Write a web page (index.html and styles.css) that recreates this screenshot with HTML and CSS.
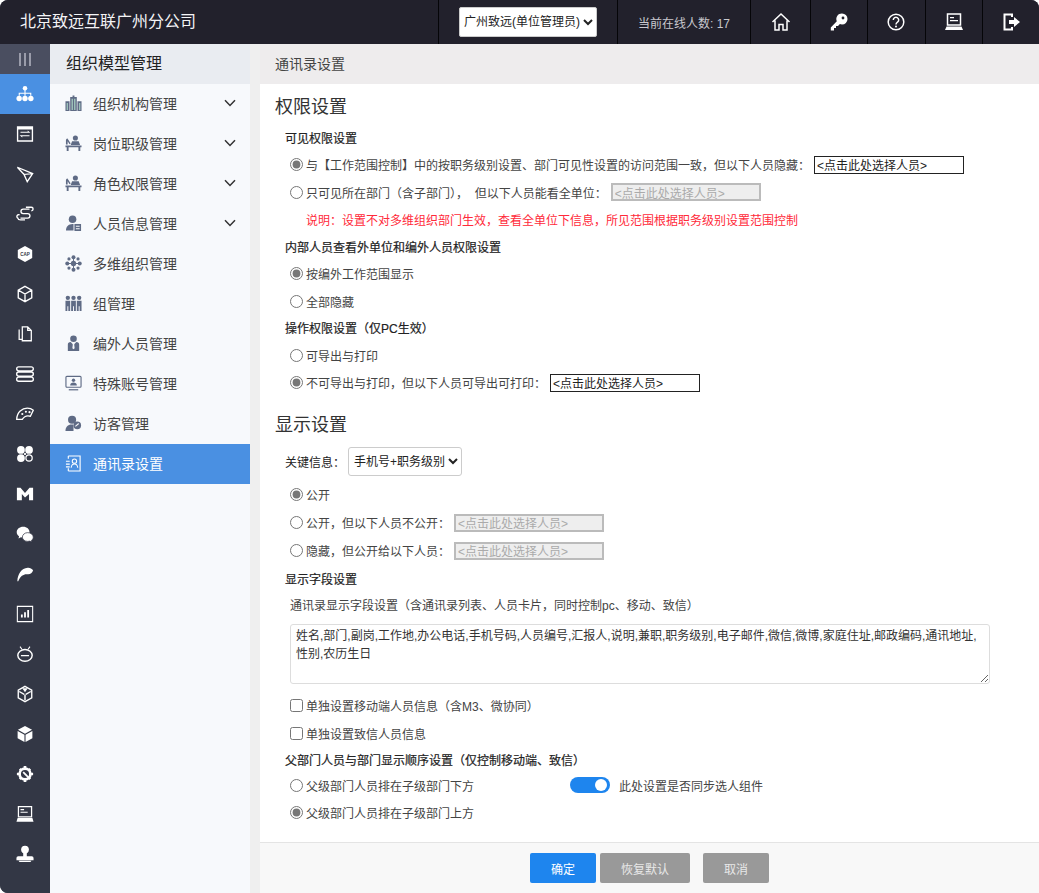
FILE: index.html
```html
<!DOCTYPE html>
<html lang="zh-CN">
  <head>
    <meta charset="UTF-8" />
    <title>通讯录设置</title>
    <link rel="stylesheet" href="styles.css">
  </head>

  <body>
    <div class="app">
      <header class="topbar">
        <div class="brand">北京致远互联广州分公司</div>
        <div class="top-cell unit-cell">
          <select class="unit-select"><option>广州致远(单位管理员)</option></select>
        </div>
        <div class="top-cell online">当前在线人数: 17</div>
        <div class="top-cell top-btn first">
          <svg viewBox="0 0 20 20" class="top-icon"><path d="M1.500 10 10 2l8.500 8M4 8.500V18h4v-5.500h4V18h4V8.500" fill="none" stroke="#fff" stroke-width="1.500"/></svg>
        </div>
        <div class="top-cell top-btn">
          <svg viewBox="0 0 20 20" class="top-icon"><path d="M13 1.500a5.500 5.500 0 0 1 0 11c-.8 0-1.500-.2-2.100-.4L9 14H7v2H5v2.500H1.800v-3l6-6.200A5.500 5.500 0 0 1 13 1.500z" fill="#fff"/><circle cx="14" cy="6" r="1.400" fill="#22212c"/></svg>
        </div>
        <div class="top-cell top-btn">
          <svg viewBox="0 0 20 20" class="top-icon"><circle cx="10" cy="10" r="7.800" fill="none" stroke="#fff" stroke-width="1.500"/><path d="M7.300 8a2.700 2.700 0 1 1 4.200 2.200c-1 .7-1.500 1.100-1.500 2.400" fill="none" stroke="#fff" stroke-width="1.500"/><circle cx="10" cy="14.600" r="1" fill="#fff"/></svg>
        </div>
        <div class="top-cell top-btn">
          <svg viewBox="0 0 20 20" class="top-icon"><path d="M3.500 2h13v11h-13z" fill="none" stroke="#fff" stroke-width="1.500"/><path d="M2.500 14.500h15l1.500 3.500H1z" fill="#fff"/><path d="M6 5h4v1.200H6zM6 8h8v1.200H6z" fill="#fff"/></svg>
        </div>
        <div class="top-cell top-btn">
          <svg viewBox="0 0 20 20" class="top-icon"><path d="M11 5V2.500H3.500v15H11V15" fill="none" stroke="#fff" stroke-width="2"/><path d="M8 8h5V5l6 5-6 5v-3H8z" fill="#fff"/></svg>
        </div>
      </header>

      <div class="body-wrap">
        <nav class="rail">
          <div class="rail-toggle"><span></span><span></span><span></span></div>
          <a class="rail-item active">
            <svg viewBox="0 0 20 20" class="rail-icon"><circle cx="10" cy="3.500" r="2.500"/><path d="M9.400 5h1.200v3.500h6.400V12h-1.200V9.700h-5.200V12H9.400V9.700H4.200V12H3V8.500h6.400z"/><circle cx="3.500" cy="15" r="3"/><circle cx="10" cy="15" r="3"/><circle cx="16.500" cy="15" r="3"/></svg>
          </a>
          <a class="rail-item">
            <svg viewBox="0 0 20 20" class="rail-icon"><path fill-rule="evenodd" d="M1 1.500h18v17H1zM2.500 5v12h15V5z"/><path d="M5 7.500h8V6l3 2.500H5zM15 12.500H7V14l-3-2.500h11z"/></svg>
          </a>
          <a class="rail-item">
            <svg viewBox="0 0 20 20" class="rail-icon"><path d="M1.500 2.500 18.500 9.500 12.500 18.500 9 10.500 18.500 9.500M1.500 2.500 9 10.500" fill="none" stroke="#fff" stroke-width="1.500"/></svg>
          </a>
          <a class="rail-item">
            <svg viewBox="0 0 20 20" class="rail-icon"><path d="M15 4.500H8a2.500 2.500 0 0 0 0 5h5a2.500 2.500 0 0 1 0 5H5M11 2.500h6a2 2 0 0 1 0 4M4 11a2 2 0 0 0-2 3.500c.3 1.500 1.500 2 3 2h5" fill="none" stroke="#fff" stroke-width="1.500"/></svg>
          </a>
          <a class="rail-item">
            <svg viewBox="0 0 20 20" class="rail-icon"><path d="M10 1l8 4.500v9L10 19l-8-4.500v-9z"/><text x="10" y="11.800" class="cap-text">CAP</text></svg>
          </a>
          <a class="rail-item">
            <svg viewBox="0 0 20 20" class="rail-icon"><path d="M10 1.500l7.500 4.200v8.600L10 18.500l-7.500-4.200V5.700zM2.500 5.700 10 10l7.500-4.300M10 10v8.500" fill="none" stroke="#fff" stroke-width="1.500"/></svg>
          </a>
          <a class="rail-item">
            <svg viewBox="0 0 20 20" class="rail-icon"><path d="M7 5.500V2h6l4 4v11.500H7zM13 2v4h4M3.500 5v11H7" fill="none" stroke="#fff" stroke-width="1.400"/></svg>
          </a>
          <a class="rail-item">
            <svg viewBox="0 0 20 20" class="rail-icon"><path d="M3 2h14a1.500 1.500 0 0 1 0 4.500H3A1.500 1.500 0 0 1 3 2zM3 7.800h14a1.500 1.500 0 0 1 0 4.500H3a1.500 1.500 0 0 1 0-4.500zM3 13.500h14a1.500 1.500 0 0 1 0 4.500H3a1.500 1.500 0 0 1 0-4.500z" fill="none" stroke="#fff" stroke-width="1.500"/></svg>
          </a>
          <a class="rail-item">
            <svg viewBox="0 0 20 20" class="rail-icon"><path d="M.8 16C1 8 7 3.500 12.500 3.500c2.500 0 5 .8 6.700 2.300L16 12.500c-3-1-6.500-.5-9 3.500z" fill="none" stroke="#fff" stroke-width="1.500"/><circle cx="7" cy="10" r="1.200"/><circle cx="11" cy="7.500" r="1.200"/><circle cx="15" cy="8" r="1.200"/></svg>
          </a>
          <a class="rail-item">
            <svg viewBox="0 0 20 20" class="rail-icon"><circle cx="5.500" cy="5.500" r="4.300"/><circle cx="14.500" cy="5.500" r="4.300"/><circle cx="5.500" cy="14.500" r="4.300"/><circle cx="14.500" cy="14.500" r="3.500" fill="none" stroke="#fff" stroke-width="1.400"/><path d="M9 9h2v2H9z"/></svg>
          </a>
          <a class="rail-item">
            <svg viewBox="0 0 20 20" class="rail-icon"><path d="M1 3h4l5 6 5-6h4v14h-4.500V10L10 14l-3.500-4v7H1z"/></svg>
          </a>
          <a class="rail-item">
            <svg viewBox="0 0 20 20" class="rail-icon"><path d="M8 2C3.800 2 .8 4.700.8 8c0 1.900 1 3.500 2.600 4.600L2.800 15l2.700-1.400c.8.200 1.600.3 2.500.3C12.200 13.900 15 11.200 15 8S12.200 2 8 2z"/><path d="M13 8.500c3.400 0 6.200 2.200 6.200 5 0 1.500-.8 2.800-2.100 3.700l.4 1.800-2.100-1.100c-.7.200-1.500.300-2.300.300-3.400 0-6-2.100-6-4.700s2.500-5 5.900-5z" stroke="#333745" stroke-width=".8"/></svg>
          </a>
          <a class="rail-item">
            <svg viewBox="0 0 20 20" class="rail-icon"><path d="M1.500 18C1.800 10 6 3.500 13 3c2.500-.2 4.500.8 6 2.800-1 3.500-3.500 5-6.500 4.500C9 9.800 5 11.800 2.500 18z"/></svg>
          </a>
          <a class="rail-item">
            <svg viewBox="0 0 20 20" class="rail-icon"><path d="M7 1.500H1.500v17H7M13 1.500h5.500v17H13M1.500 1.500h17M2 18.500h16" fill="none" stroke="#fff" stroke-width="1.200"/><path d="M5.500 10.500h2V14h-2zM9 8h2v6H9zM12.500 5.500h2V14h-2z"/></svg>
          </a>
          <a class="rail-item">
            <svg viewBox="0 0 20 20" class="rail-icon"><ellipse cx="10" cy="11.500" rx="8" ry="6.500" fill="none" stroke="#fff" stroke-width="1.600"/><path d="M5.500 11h9v1.500h-9zM5 1.500l2 3-1 .6-2-3zM15 1.500l-2 3 1 .6 2-3z"/></svg>
          </a>
          <a class="rail-item">
            <svg viewBox="0 0 20 20" class="rail-icon"><path d="M10 1.500l7.500 4.200v8.600L10 18.500l-7.500-4.200V5.700z" fill="none" stroke="#fff" stroke-width="1.500"/><path d="M9.200 10.500V17h1.600v-6.500zM9.500 9.800 4 6.600l-.8 1.300 5.500 3.200zM10.500 9.800 16 6.600l.8 1.300-5.500 3.200zM7 3.500h6L10 8z"/></svg>
          </a>
          <a class="rail-item">
            <svg viewBox="0 0 20 20" class="rail-icon"><path d="M10 1 17.800 5.300 10 9.600 2.200 5.300zM1.800 6.600 9.400 10.800V19L1.800 14.800zM18.200 6.600 10.600 10.800V19l7.600-4.200z"/></svg>
          </a>
          <a class="rail-item">
            <svg viewBox="0 0 20 20" class="rail-icon"><circle cx="10" cy="10" r="6" fill="none" stroke="#fff" stroke-width="3"/><path d="M8.500 1h3v3h-3zM8.500 16h3v3h-3zM1 8.500h3v3H1zM16 8.500h3v3h-3zM3.200 5.300l2-2 2 2-2 2zM12.800 14.700l2-2 2 2-2 2zM3.200 14.700l2-2 2 2-2 2zM12.800 5.300l2-2 2 2-2 2z"/><path d="M8 8l6 6" stroke="#fff" stroke-width="2"/></svg>
          </a>
          <a class="rail-item">
            <svg viewBox="0 0 20 20" class="rail-icon"><path d="M2.700 1.800h14.600v11.400H2.700z" fill="none" stroke="#fff" stroke-width="1.400"/><path d="M1.800 14.500h16.400l1.300 4H.5zM5 4.500h4v1.200H5zM5 7.500h8v1.200H5z"/></svg>
          </a>
          <a class="rail-item">
            <svg viewBox="0 0 20 20" class="rail-icon"><circle cx="10" cy="5" r="4.300"/><path d="M8 8h4v4.500h5.500a2 2 0 0 1 2 2V17H.5v-2.500a2 2 0 0 1 2-2H8zM3 17.500h14c0 1-1 1.500-2 1.500H5c-1 0-2-.5-2-1.500z"/></svg>
          </a>
        </nav>

        <aside class="sidebar">
          <div class="side-head">组织模型管理</div>
          <ul class="side-menu">
            <li class="side-item">
              <svg viewBox="0 0 18 18" class="side-icon"><path d="M5.500 2 8 2V.5h2V2l2.500 0V17h-7zM.5 6.500h4.300V17H.5zM13.200 6.500h4.300V17h-4.300z"/><path d="M7 4h1.300v12H7zM9.700 4H11v12H9.700zM1.800 8.500H3V16H1.800zM15 8.500h1.200V16H15z" fill="#a9d2c4"/></svg>
              <span class="side-label">组织机构管理</span>
              <svg viewBox="0 0 12 8" class="chevron"><path d="M1 1.200 6 6.500l5-5.300" fill="none" stroke="#333" stroke-width="1.500"/></svg>
            </li>
            <li class="side-item">
              <svg viewBox="0 0 18 18" class="side-icon"><circle cx="11" cy="3.200" r="2.700"/><path d="M7.500 6.500h7l1.500 4h-10zM.5 11h17v2h-1.300v4h-2v-4H3.800v4h-2v-4H.5zM1 10V5l1.300-1.500L3.500 5 6 9l-1.200.7-2-3V10z"/></svg>
              <span class="side-label">岗位职级管理</span>
              <svg viewBox="0 0 12 8" class="chevron"><path d="M1 1.200 6 6.500l5-5.300" fill="none" stroke="#333" stroke-width="1.500"/></svg>
            </li>
            <li class="side-item">
              <svg viewBox="0 0 18 18" class="side-icon"><circle cx="11" cy="3.200" r="2.700"/><path d="M7.500 6.500h7l1.500 4h-10zM.5 11h17v2h-1.300v4h-2v-4H3.800v4h-2v-4H.5zM1 10V5l1.300-1.500L3.500 5 6 9l-1.200.7-2-3V10z"/></svg>
              <span class="side-label">角色权限管理</span>
              <svg viewBox="0 0 12 8" class="chevron"><path d="M1 1.200 6 6.500l5-5.300" fill="none" stroke="#333" stroke-width="1.500"/></svg>
            </li>
            <li class="side-item">
              <svg viewBox="0 0 18 18" class="side-icon"><circle cx="8" cy="4.500" r="4"/><path d="M1 16.500c0-4 2.500-7 7-7h1v7z"/><path d="M10 9.500h7v7.500h-7z"/><path d="M11.500 11.500h4v1h-4zM11.500 14h4v1h-4z" fill="#f7f9fc"/></svg>
              <span class="side-label">人员信息管理</span>
              <svg viewBox="0 0 12 8" class="chevron"><path d="M1 1.200 6 6.500l5-5.300" fill="none" stroke="#333" stroke-width="1.500"/></svg>
            </li>
            <li class="side-item">
              <svg viewBox="0 0 18 18" class="side-icon"><circle cx="9" cy="9" r="2.800"/><circle cx="9" cy="2.400" r="2.100"/><circle cx="9" cy="15.600" r="2.100"/><circle cx="2.400" cy="9" r="2.100"/><circle cx="15.600" cy="9" r="2.100"/><circle cx="4.200" cy="4.200" r="1.700"/><circle cx="13.800" cy="4.200" r="1.700"/><circle cx="4.200" cy="13.800" r="1.700"/><circle cx="13.800" cy="13.800" r="1.700"/><path d="M8.500 2h1v14h-1zM2 8.500h14v1H2z"/></svg>
              <span class="side-label">多维组织管理</span>
            </li>
            <li class="side-item">
              <svg viewBox="0 0 18 18" class="side-icon"><circle cx="3" cy="3" r="2.300"/><circle cx="9" cy="3" r="2.300"/><circle cx="15" cy="3" r="2.300"/><path d="M.5 6h5v11H3.500v-5h-1v5H.5zM6.500 6h5v11H9.500v-5h-1v5H6.500zM12.500 6h5v11h-2v-5h-1v5h-2z"/></svg>
              <span class="side-label">组管理</span>
            </li>
            <li class="side-item">
              <svg viewBox="0 0 18 18" class="side-icon"><circle cx="9" cy="4" r="3.500"/><path d="M3 10c0-1.500 1-2.300 3-2.500l3 3 3-3c2 .2 3 1 3 2.500v7H3z"/><path d="M8.300 9.500h1.400l.5 4.500-1.200 1-1.200-1z" fill="#f7f9fc"/></svg>
              <span class="side-label">编外人员管理</span>
            </li>
            <li class="side-item">
              <svg viewBox="0 0 18 18" class="side-icon"><path d="M2 1.500h14a1 1 0 0 1 1 1V12a1 1 0 0 1-1 1H2a1 1 0 0 1-1-1V2.500a1 1 0 0 1 1-1z" fill="none" stroke="#5f6b85" stroke-width="1.200"/><circle cx="9" cy="5.500" r="1.800"/><path d="M5.500 11c0-2 1.500-3 3.500-3s3.500 1 3.500 3z"/><path d="M4 15h10v1.300H4z"/></svg>
              <span class="side-label">特殊账号管理</span>
            </li>
            <li class="side-item">
              <svg viewBox="0 0 18 18" class="side-icon"><circle cx="7.500" cy="5" r="4.300"/><path d="M.5 17c0-4.500 2.500-7 6.500-7 1 0 1.500.1 2 .3V17z"/><circle cx="13" cy="11" r="4"/><path d="M11 12l3.500-3" stroke="#f7f9fc" stroke-width="1.200"/></svg>
              <span class="side-label">访客管理</span>
            </li>
            <li class="side-item current">
              <svg viewBox="0 0 18 18" class="side-icon"><path d="M3.500 1h12.500v16H3.500" fill="none" stroke="#fff" stroke-width="1.200"/><path d="M3.500 1v3M3.500 14v3" stroke="#fff" stroke-width="1.200"/><path d="M1 6h4v1.200H1zM1 9h4v1.200H1zM1 12h4v1.200H1z" fill="#fff"/><circle cx="10" cy="6.500" r="2.300" fill="none" stroke="#fff" stroke-width="1.100"/><path d="M6.500 13.500c.3-2.500 1.700-4 3.500-4s3.200 1.500 3.500 4" fill="none" stroke="#fff" stroke-width="1.100"/></svg>
              <span class="side-label">通讯录设置</span>
            </li>
          </ul>
        </aside>

        <div class="gutter"></div>

        <main class="main">
          <div class="crumb">通讯录设置</div>
          <div class="content">
            <h2 class="sec-title">权限设置</h2>
            <div class="sub">可见权限设置</div>
            <label class="row">
              <input type="radio" name="vis" checked>
              <span>与【工作范围控制】中的按职务级别设置、部门可见性设置的访问范围一致，但以下人员隐藏：</span>
              <input class="picker" type="text" value="&lt;点击此处选择人员&gt;">
            </label>
            <label class="row">
              <input type="radio" name="vis">
              <span>只可见所在部门（含子部门），&nbsp;&nbsp;但以下人员能看全单位：</span>
              <input class="picker off" type="text" value="&lt;点击此处选择人员&gt;" disabled>
            </label>
            <div class="row note">说明：设置不对多维组织部门生效，查看全单位下信息，所见范围根据职务级别设置范围控制</div>
            <div class="sub">内部人员查看外单位和编外人员权限设置</div>
            <label class="row"><input type="radio" name="ext" checked><span>按编外工作范围显示</span></label>
            <label class="row"><input type="radio" name="ext"><span>全部隐藏</span></label>
            <div class="sub">操作权限设置（仅PC生效）</div>
            <label class="row"><input type="radio" name="exp"><span>可导出与打印</span></label>
            <label class="row">
              <input type="radio" name="exp" checked>
              <span>不可导出与打印，但以下人员可导出可打印：</span>
              <input class="picker" type="text" value="&lt;点击此处选择人员&gt;">
            </label>

            <h2 class="sec-title second">显示设置</h2>
            <div class="key-row">
              <span>关键信息：</span>
              <select class="key-select"><option>手机号+职务级别</option></select>
            </div>
            <label class="row wide"><input type="radio" name="pub" checked><span>公开</span></label>
            <label class="row wide">
              <input type="radio" name="pub"><span>公开，但以下人员不公开：</span>
              <input class="picker off" type="text" value="&lt;点击此处选择人员&gt;" disabled>
            </label>
            <label class="row wide">
              <input type="radio" name="pub"><span>隐藏，但公开给以下人员：</span>
              <input class="picker off" type="text" value="&lt;点击此处选择人员&gt;" disabled>
            </label>
            <div class="sub">显示字段设置</div>
            <div class="field-hint">通讯录显示字段设置（含通讯录列表、人员卡片，同时控制pc、移动、致信）</div>
            <textarea class="fields">姓名,部门,副岗,工作地,办公电话,手机号码,人员编号,汇报人,说明,兼职,职务级别,电子邮件,微信,微博,家庭住址,邮政编码,通讯地址,性别,农历生日</textarea>
            <label class="row check"><input type="checkbox"><span>单独设置移动端人员信息（含M3、微协同）</span></label>
            <label class="row check"><input type="checkbox"><span>单独设置致信人员信息</span></label>
            <div class="sub order">父部门人员与部门显示顺序设置（仅控制移动端、致信）</div>
            <div class="order-row">
              <label class="row"><input type="radio" name="ord"><span>父级部门人员排在子级部门下方</span></label>
              <div class="sync">
                <span class="switch"></span>
                <span>此处设置是否同步选人组件</span>
              </div>
            </div>
            <label class="row"><input type="radio" name="ord" checked><span>父级部门人员排在子级部门上方</span></label>
          </div>
          <footer class="actions">
            <button class="btn primary">确定</button>
            <button class="btn reset">恢复默认</button>
            <button class="btn cancel">取消</button>
          </footer>
        </main>
      </div>
    </div>
  </body>
</html>
```

FILE: styles.css
```css
* {
  box-sizing: border-box;
}
html,
body {
  margin: 0;
  height: 100%;
  background-color: white;
  overflow: hidden;
}
body {
  font-family: "Liberation Sans", "Noto Sans CJK SC", sans-serif;
  font-size: 12px;
  color: #333;
}
.app {
  height: 893px;
  display: flex;
  flex-direction: column;
  border-radius: 8px 8px 0 8px;
  overflow: hidden;
  background-color: #333745;
}

/* top bar */
.topbar {
  height: 44px;
  flex: none;
  display: flex;
  align-items: stretch;
  background-color: #22212c;
  color: white;
}
.brand {
  width: 438px;
  padding-left: 20px;
  font-size: 16px;
  line-height: 43px;
  color: #f4f4f6;
}
.top-cell {
  display: flex;
  align-items: center;
  justify-content: center;
  border-left: 1px solid #050508;
}
.unit-cell {
  width: 179px;
}
.unit-select {
  width: 138px;
  height: 30px;
  font-family: inherit;
  font-size: 12px;
  color: #222;
  background-color: white;
  border: 1px solid #ccc;
  border-radius: 2px;
  padding: 0;
}
.online {
  width: 133px;
  color: #c8c8ce;
}
.top-btn {
  width: 57.300px;
}
.top-btn.first {
  width: 60px;
}
.top-btn:last-child {
  flex: 1;
}
.top-icon {
  width: 20px;
  height: 20px;
}

.body-wrap {
  flex: 1;
  display: flex;
  min-height: 0;
}

/* icon rail */
.rail {
  width: 50px;
  flex: none;
  background-color: #333745;
}
.rail-toggle {
  height: 30px;
  display: flex;
  align-items: center;
  justify-content: center;
  gap: 3px;
  background-color: #4a4e60;
}
.rail-toggle span {
  width: 2px;
  height: 13px;
  background-color: #9a9caa;
}
.rail-item {
  height: 40px;
  display: flex;
  align-items: center;
  justify-content: center;
}
.rail-item.active {
  background-color: #4a90e2;
}
.rail-icon {
  width: 18px;
  height: 18px;
  fill: white;
}
.cap-text {
  font-family: "Liberation Sans", sans-serif;
  font-size: 5px;
  font-weight: bold;
  text-anchor: middle;
  fill: #333745;
}

/* second level menu */
.sidebar {
  width: 200px;
  flex: none;
  background-color: #f7f9fc;
}
.side-head {
  height: 40px;
  padding-left: 16px;
  font-size: 16px;
  line-height: 39px;
  color: #222;
  background-color: #e9ecf1;
}
.side-menu {
  list-style: none;
  margin: 0;
  padding: 0;
}
.side-item {
  height: 40px;
  display: flex;
  align-items: center;
  padding: 0 0 2px 15px;
  font-size: 14px;
  color: #444;
}
.side-item.current {
  background-color: #4a90e2;
  color: white;
}
.side-icon {
  width: 17px;
  height: 17px;
  flex: none;
  fill: #5f6b85;
}
.side-label {
  margin-left: 11px;
  flex: 1;
}
.chevron {
  width: 12px;
  height: 8px;
  margin-right: 14px;
}
.gutter {
  width: 10px;
  flex: none;
  background-color: #efefef;
}

/* right side */
.main {
  flex: 1;
  display: flex;
  flex-direction: column;
  min-width: 0;
  background-color: white;
}
.crumb {
  height: 40px;
  flex: none;
  padding-left: 15px;
  font-size: 14px;
  line-height: 40px;
  color: #444;
  background-color: #eeeced;
}
.content {
  flex: 1;
  padding-left: 15px;
  min-height: 0;
}
.sec-title {
  margin: 0;
  height: 40.500px;
  padding-top: 11px;
  font-size: 18px;
  font-weight: normal;
  line-height: 24px;
  color: #333;
}
.sec-title.second {
  height: 50.500px;
  padding-top: 16px;
}
.sub {
  height: 26.500px;
  margin-left: 10px;
  line-height: 28.500px;
  color: #222;
  -webkit-text-stroke: 0.2px #222;
}
.sub.order {
  height: 24.500px;
}
.row {
  height: 27.500px;
  display: flex;
  align-items: center;
  margin-left: 15px;
  color: #444;
}
.row input[type="radio"],
.row input[type="checkbox"] {
  width: 13px;
  height: 13px;
  margin: 0 3px 0 0;
  accent-color: #777;
}
.row.wide {
  height: 28px;
}
.row.wide + .sub {
  margin-top: 1.500px;
}
.note {
  padding-left: 16px;
  color: #ff2a3a;
}
.picker {
  width: 150px;
  height: 18px;
  margin-left: 4px;
  padding: 0 2px;
  font-family: inherit;
  font-size: 12px;
  color: #222;
  background-color: white;
  border: 1px solid #222;
  border-radius: 0;
}
.picker.off {
  color: #aaa;
  background-color: #eee;
  border: 2px solid #bbb;
}
.key-row {
  height: 29px;
  margin: 0 0 4.500px 10px;
  display: flex;
  align-items: center;
  color: #222;
}
.key-select {
  width: 114px;
  height: 29px;
  margin-left: 3px;
  padding: 0 0 0 1px;
  font-family: inherit;
  font-size: 12px;
  color: #222;
  background-color: white;
  border: 1px solid #ccc;
  border-radius: 3px;
}
.field-hint {
  height: 25px;
  margin: 1px 0 0 15px;
  line-height: 25px;
  color: #444;
}
.fields {
  display: block;
  width: 700px;
  height: 60px;
  margin: 5.500px 0 7px 15px;
  padding: 2px 5px;
  font-family: inherit;
  font-size: 12px;
  line-height: 18px;
  color: #333;
  border: 1px solid #ddd;
  border-radius: 3px;
}
.check {
  height: 28px;
}
.order-row {
  display: flex;
  align-items: center;
}
.order-row .row {
  width: 280px;
}
.sync {
  display: flex;
  align-items: center;
  gap: 9px;
  color: #444;
}
.switch {
  width: 40px;
  height: 16px;
  border-radius: 8px;
  background-color: #1e85ee;
  position: relative;
}
.switch::after {
  content: "";
  position: absolute;
  right: 3px;
  top: 2px;
  width: 12px;
  height: 12px;
  border-radius: 50%;
  background-color: white;
}
.actions {
  height: 51px;
  flex: none;
  display: flex;
  align-items: center;
  padding-left: 270px;
  border-top: 1px solid #e4e4e4;
  background-color: #f8f8f8;
}
.btn {
  height: 30px;
  border: 0;
  border-radius: 2px;
  font-family: inherit;
  font-size: 12px;
  color: white;
}
.btn.primary {
  width: 66px;
  background-color: #1e85ee;
}
.btn.reset {
  width: 90px;
  margin-left: 4px;
  color: #e8e8e8;
  background-color: #999;
}
.btn.cancel {
  width: 66px;
  margin-left: 13px;
  color: #e8e8e8;
  background-color: #999;
}
```
